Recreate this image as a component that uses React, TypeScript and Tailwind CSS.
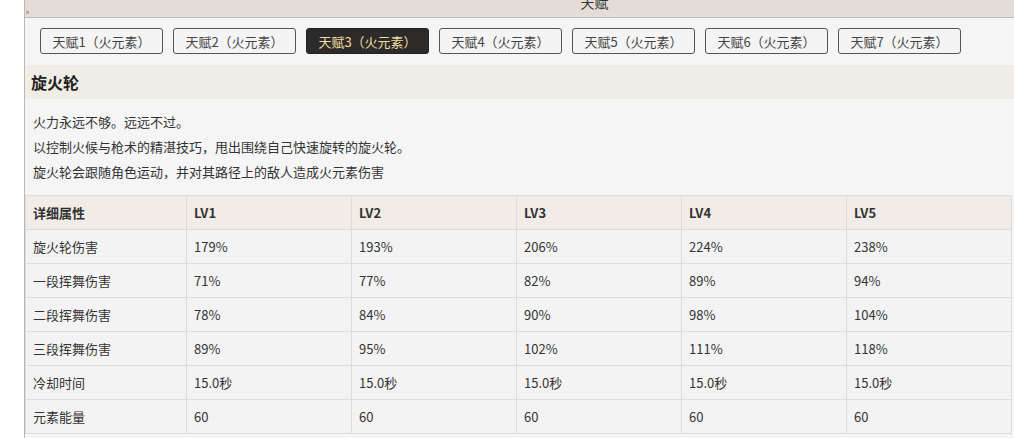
const tabs = [1, 2, 3, 4, 5, 6, 7];

const rows: string[][] = [
  ['旋火轮伤害', '179%', '193%', '206%', '224%', '238%'],
  ['一段挥舞伤害', '71%', '77%', '82%', '89%', '94%'],
  ['二段挥舞伤害', '78%', '84%', '90%', '98%', '104%'],
  ['三段挥舞伤害', '89%', '95%', '102%', '111%', '118%'],
  ['冷却时间', '15.0秒', '15.0秒', '15.0秒', '15.0秒', '15.0秒'],
  ['元素能量', '60', '60', '60', '60', '60'],
];

const font = { fontFamily: '"Noto Sans CJK SC", "Noto Sans", sans-serif' };

export default function App() {
  return (
    <div className="w-[1014px] h-[438px] overflow-hidden bg-white flex text-[#333]" style={font}>
      <div className="w-[24px] shrink-0 bg-white" />
      <div className="flex-1 border-l border-[#b8b8b8] bg-[#f5f5f5] flex flex-col">
        {/* top bar */}
        <div className="h-[18px] shrink-0 bg-[#e4ddd7] border-b border-[#bdbdbd] relative flex justify-center">
          <span className="absolute left-[1px] top-[11px] w-[3px] h-[3px] bg-[#c9a58c]" />
          <span className="text-[14px] leading-[14px] mt-[-5px] ml-[150px] text-[#333]">天赋</span>
        </div>

        {/* tabs */}
        <div className="flex gap-[10px] pl-[15px] pt-[10px] h-[47px] shrink-0">
          {tabs.map((n) => (
            <button
              key={n}
              className={
                n === 3
                  ? 'w-[123px] h-[26px] rounded-[3px] border border-[#222] bg-[#2d2b29] text-[#f2dca4] text-[13px] leading-none'
                  : 'w-[123px] h-[26px] rounded-[3px] border border-[#555] bg-[#f4f4f4] text-[#444] text-[13px] leading-none'
              }
            >
              天赋{n}（火元素）
            </button>
          ))}
        </div>

        {/* title */}
        <div className="h-[34px] shrink-0 bg-[#f0ece6] flex items-center pl-[6px]">
          <span className="text-[16px] font-bold text-[#222]">旋火轮</span>
        </div>

        {/* description */}
        <div className="pl-[8px] pt-[10px] text-[13px] leading-[25px] text-[#333] h-[96px] shrink-0">
          <p>火力永远不够。远远不过。</p>
          <p>以控制火候与枪术的精湛技巧，甩出围绕自己快速旋转的旋火轮。</p>
          <p>旋火轮会跟随角色运动，并对其路径上的敌人造成火元素伤害</p>
        </div>

        {/* table */}
        <table className="w-[987px] border-collapse text-[13px] text-[#333]">
          <thead>
            <tr className="bg-[#f1ece7] h-[34px]">
              {['详细属性', 'LV1', 'LV2', 'LV3', 'LV4', 'LV5'].map((h, i) => (
                <th
                  key={h}
                  className={
                    (i === 0 ? 'w-[161px] ' : 'w-[165px] ') +
                    'border border-[#dcdcdc] text-left font-bold pl-[7px] text-[#333]'
                  }
                >
                  {h}
                </th>
              ))}
            </tr>
          </thead>
          <tbody>
            {rows.map((r) => (
              <tr key={r[0]} className="h-[34px] bg-[#f3f3f3]">
                {r.map((c, i) => (
                  <td key={i} className="border border-[#dcdcdc] pl-[7px]">
                    {c}
                  </td>
                ))}
              </tr>
            ))}
          </tbody>
        </table>
      </div>
    </div>
  );
}
